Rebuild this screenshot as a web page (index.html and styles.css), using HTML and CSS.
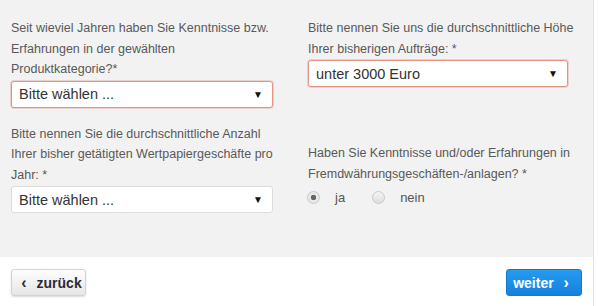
FILE: index.html
```html
<!DOCTYPE html>
<html lang="de">
<head>
    <meta charset="UTF-8">
    <meta name="viewport" content="width=device-width, initial-scale=1.0">
    <title>Erfahrungen und Kenntnisse</title>
    <link rel="stylesheet" href="styles.css">
</head>
<body>
    <div class="page">
        <form class="panel">
            <div class="field">
                <label class="label" for="jahre">Seit wieviel Jahren haben Sie Kenntnisse bzw. Erfahrungen in der gewählten Produktkategorie?*</label>
                <div class="select error">
                    <span>Bitte wählen ...</span>
                    <span class="arrow">&#9660;</span>
                </div>
            </div>
            <div class="field">
                <label class="label" for="hoehe">Bitte nennen Sie uns die durchschnittliche Höhe Ihrer bisherigen Aufträge: *</label>
                <div class="select error">
                    <span>unter 3000 Euro</span>
                    <span class="arrow">&#9660;</span>
                </div>
            </div>
            <div class="field">
                <label class="label" for="anzahl">Bitte nennen Sie die durchschnittliche Anzahl Ihrer bisher getätigten Wertpapiergeschäfte pro Jahr: *</label>
                <div class="select">
                    <span>Bitte wählen ...</span>
                    <span class="arrow">&#9660;</span>
                </div>
            </div>
            <div class="field field-bottom">
                <span class="label">Haben Sie Kenntnisse und/oder Erfahrungen in Fremdwährungsgeschäften-/anlagen? *</span>
                <div class="radios">
                    <label class="radio"><input type="radio" name="fremd" checked> ja</label>
                    <label class="radio"><input type="radio" name="fremd"> nein</label>
                </div>
            </div>
        </form>
        <div class="actions">
            <button class="btn btn-back" type="button"><span class="chev">&lsaquo;</span> zurück</button>
            <button class="btn btn-next" type="button">weiter <span class="chev">&rsaquo;</span></button>
        </div>
    </div>
</body>
</html>
```

FILE: styles.css
```css
html, body {
    margin: 0;
    padding: 0;
    height: 100%;
    font-family: "Liberation Sans", Arial, sans-serif;
    background: #fff;
}
.page {
    width: 593px;
    height: 100%;
    border-right: 1px solid #e2e2e2;
}
.panel {
    background: #f2f2f2;
    display: grid;
    grid-template-columns: 262px 272px;
    column-gap: 35px;
    row-gap: 16px;
    padding: 18px 0 44px 11px;
}
.field {
    display: flex;
    flex-direction: column;
}
.field-bottom {
    align-self: end;
}
.label {
    font-size: 12.5px;
    line-height: 20.5px;
    color: #595959;
    margin-bottom: 1px;
}
.select {
    width: 262px;
    height: 27px;
    box-sizing: border-box;
    background: #fff;
    border: 1px solid #dcdcdc;
    border-radius: 3px;
    display: flex;
    align-items: center;
    justify-content: space-between;
    padding: 0 9px 0 7px;
    font-size: 14.5px;
    color: #333;
}
.field:nth-child(2) .select {
    width: 260px;
}
.select.error {
    border-color: #e39384;
    box-shadow: 0 0 0 1px rgba(227, 147, 132, 0.35);
}
.arrow {
    font-size: 10px;
    color: #111;
}
.radios {
    display: flex;
    align-items: center;
    gap: 28px;
    height: 24px;
    margin-bottom: 4px;
}
.radio {
    display: flex;
    align-items: center;
    gap: 15px;
    font-size: 13px;
    color: #555;
}
.radio input {
    appearance: none;
    margin: 0 0 0 -1px;
    width: 13px;
    height: 13px;
    border-radius: 50%;
    border: 1px solid #c9c9c9;
    background: linear-gradient(#f4f4f4, #dedede);
    box-sizing: border-box;
}
.radio input:checked {
    background: radial-gradient(circle, #666 0 2.5px, #e8e8e8 3px);
}
.actions {
    display: flex;
    justify-content: space-between;
    padding: 12px 11px 0 11px;
}
.btn {
    height: 27px;
    width: 75px;
    border-radius: 3px;
    font-family: "Liberation Sans", Arial, sans-serif;
    font-size: 14px;
    font-weight: bold;
    cursor: pointer;
    padding: 0;
}
.btn-back {
    background: linear-gradient(#fdfdfd, #e6e6e6);
    border: 1px solid #d2d2d2;
    color: #2b2b36;
    box-shadow: 0 1px 2px rgba(0, 0, 0, 0.15);
}
.btn-next {
    width: 76px;
    background: linear-gradient(#259bf0, #1581de);
    border: 1px solid #1679d0;
    color: #fff;
}
.chev {
    font-size: 16px;
    margin: 0 6px;
}
```
